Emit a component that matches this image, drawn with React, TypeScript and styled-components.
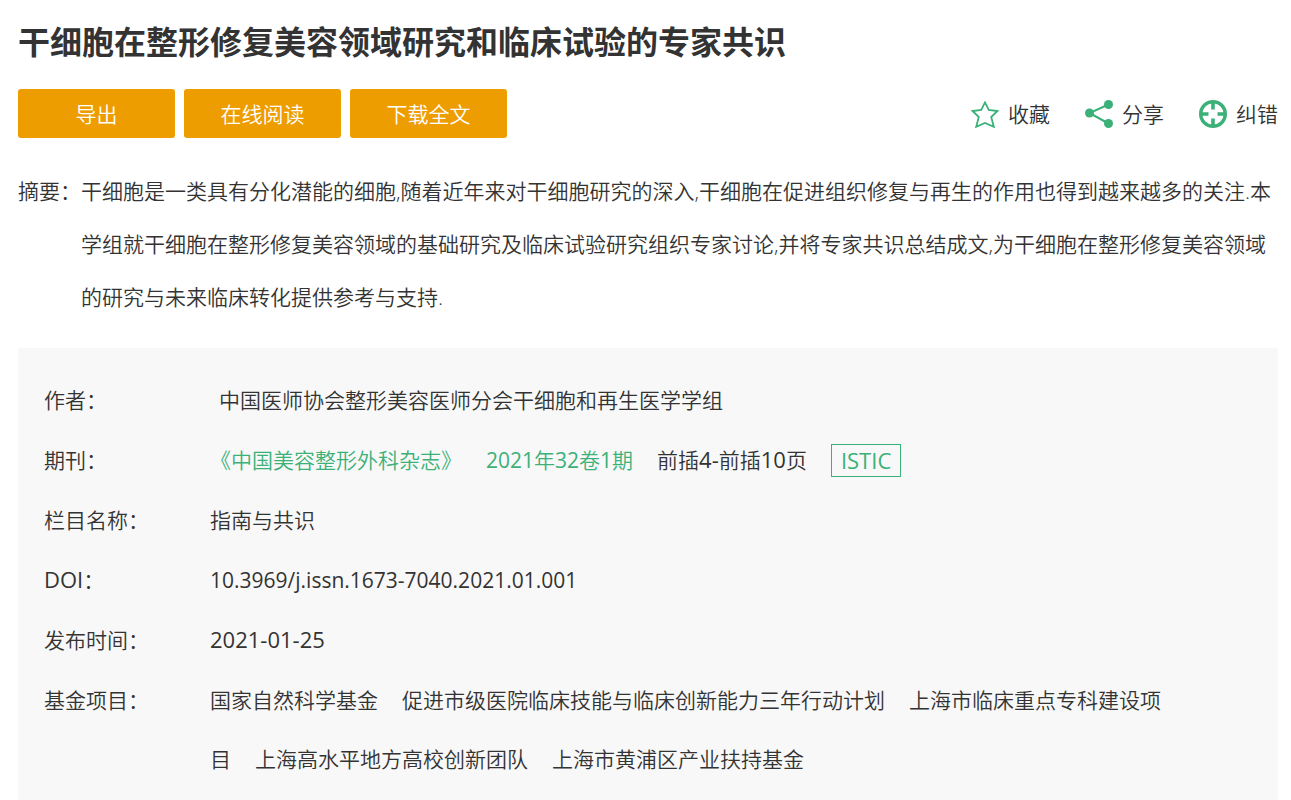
import React from "react";
import styled, { createGlobalStyle } from "styled-components";

const GREEN = "#3bb178";
const INK = "#333333";

const GlobalStyle = createGlobalStyle`
  * {
    box-sizing: border-box;
  }
  body {
    margin: 0;
    background: #ffffff;
    color: ${INK};
    font-family: "Open Sans", "Noto Sans CJK SC", sans-serif;
    font-size: 21px;
    font-weight: 350;
  }
  a {
    color: inherit;
    text-decoration: none;
  }
`;

const Page = styled.main`
  padding: 18px 13px 0 18px;
`;

const Title = styled.h1`
  margin: 0 0 23px;
  font-size: 32px;
  line-height: 48px;
  font-weight: 700;
`;

const Toolbar = styled.div`
  display: flex;
  align-items: center;
  justify-content: space-between;
`;

const ButtonGroup = styled.div`
  display: flex;
  gap: 9px;
`;

const PrimaryButton = styled.button`
  width: 157px;
  height: 49px;
  padding: 0 0 2px;
  border: 0;
  border-radius: 3px;
  background: #ee9d00;
  color: #ffffff;
  font: inherit;
  cursor: pointer;
`;

const ActionGroup = styled.div`
  display: flex;
  gap: 35px;
`;

const ActionButton = styled.button`
  display: flex;
  align-items: center;
  gap: 9px;
  padding: 0;
  border: 0;
  background: none;
  color: inherit;
  font: inherit;
  cursor: pointer;

  svg {
    display: block;
    width: 28px;
    height: 28px;
  }
`;

const ActionLabel = styled.span`
  padding-bottom: 2px;
`;

const Abstract = styled.section`
  display: flex;
  margin: 27px 0 24px;
  line-height: 53px;
`;

const AbstractLabel = styled.span`
  flex: none;
  width: 63px;
`;

const AbstractText = styled.p`
  flex: 1;
  margin: 0;
`;

const Details = styled.dl`
  display: flex;
  flex-direction: column;
  gap: 1px;
  margin: 0;
  padding: 23px 108px 26px 26px;
  background: #f8f8f8;
  line-height: 59px;
`;

const Row = styled.div`
  display: flex;
`;

const Term = styled.dt`
  flex: none;
  width: 166px;
`;

const Value = styled.dd`
  flex: 1;
  margin: 0;
`;

const Author = styled.span`
  margin-left: 9px;
`;

const Latin = styled.span<{ $size?: number }>`
  font-size: ${(p) => p.$size ?? 22}px;
  font-weight: 400;
  line-height: 1;
`;

const JournalValue = styled(Value)`
  display: flex;
  align-items: center;
  gap: 24px;
`;

const GreenLink = styled.a`
  color: ${GREEN};
`;

const Badge = styled(Latin)`
  padding: 0 9px;
  border: 1px solid ${GREEN};
  color: ${GREEN};
  line-height: 31px;
`;

const Fund = styled.span`
  margin-right: 24px;
`;

const StarIcon = () => (
  <svg viewBox="0 0 28 28" fill="none" stroke={GREEN} strokeWidth="1.8" aria-hidden="true">
    <path d="M14 2.4 17.8 9.9 26.4 11 20.2 17 22.8 26.8 14 23 5.2 26.8 7.8 17 1.6 11 10.2 9.9Z" />
  </svg>
);

const ShareIcon = () => (
  <svg viewBox="0 0 28 28" fill={GREEN} stroke={GREEN} aria-hidden="true">
    <path d="M23.5 4.5 4.5 13 23.5 23.5" fill="none" strokeWidth="2" />
    <circle cx="23.5" cy="4.5" r="4.5" stroke="none" />
    <circle cx="4.5" cy="13" r="4.5" stroke="none" />
    <circle cx="23.5" cy="23.5" r="4.5" stroke="none" />
  </svg>
);

const TargetIcon = () => (
  <svg viewBox="0 0 28 28" fill="none" stroke={GREEN} aria-hidden="true">
    <circle cx="14" cy="14" r="12.3" strokeWidth="3.4" />
    <path d="M14 2v7.5M14 18.5V26M2 14h7.5M18.5 14H26" strokeWidth="3.6" />
  </svg>
);

const exportActions = ["导出", "在线阅读", "下载全文"];

const sideActions = [
  { label: "收藏", Icon: StarIcon },
  { label: "分享", Icon: ShareIcon },
  { label: "纠错", Icon: TargetIcon },
];

const funds = [
  "国家自然科学基金",
  "促进市级医院临床技能与临床创新能力三年行动计划",
  "上海市临床重点专科建设项目",
  "上海高水平地方高校创新团队",
  "上海市黄浦区产业扶持基金",
];

export default function App() {
  return (
    <Page lang="zh-CN">
      <GlobalStyle />
      <Title>干细胞在整形修复美容领域研究和临床试验的专家共识</Title>
      <Toolbar>
        <ButtonGroup>
          {exportActions.map((label) => (
            <PrimaryButton key={label} type="button">
              {label}
            </PrimaryButton>
          ))}
        </ButtonGroup>
        <ActionGroup>
          {sideActions.map(({ label, Icon }) => (
            <ActionButton key={label} type="button">
              <Icon />
              <ActionLabel>{label}</ActionLabel>
            </ActionButton>
          ))}
        </ActionGroup>
      </Toolbar>
      <Abstract>
        <AbstractLabel>摘要：</AbstractLabel>
        <AbstractText>
          干细胞是一类具有分化潜能的细胞,随着近年来对干细胞研究的深入,干细胞在促进组织修复与再生的作用也得到越来越多的关注.本学组就干细胞在整形修复美容领域的基础研究及临床试验研究组织专家讨论,并将专家共识总结成文,为干细胞在整形修复美容领域的研究与未来临床转化提供参考与支持.
        </AbstractText>
      </Abstract>
      <Details>
        <Row>
          <Term>作者：</Term>
          <Value>
            <Author>中国医师协会整形美容医师分会干细胞和再生医学学组</Author>
          </Value>
        </Row>
        <Row>
          <Term>期刊：</Term>
          <JournalValue>
            <GreenLink href="#journal">《中国美容整形外科杂志》</GreenLink>
            <GreenLink href="#issue">
              <Latin $size={21}>2021</Latin>年<Latin $size={21}>32</Latin>卷<Latin $size={21}>1</Latin>期
            </GreenLink>
            <span>
              前插<Latin>4-</Latin>前插<Latin>10</Latin>页
            </span>
            <Badge>ISTIC</Badge>
          </JournalValue>
        </Row>
        <Row>
          <Term>栏目名称：</Term>
          <Value>指南与共识</Value>
        </Row>
        <Row>
          <Term>
            <Latin>DOI</Latin>：
          </Term>
          <Value>
            <Latin $size={21}>10.3969/j.issn.1673-7040.2021.01.001</Latin>
          </Value>
        </Row>
        <Row>
          <Term>发布时间：</Term>
          <Value>
            <Latin>2021-01-25</Latin>
          </Value>
        </Row>
        <Row>
          <Term>基金项目：</Term>
          <Value>
            {funds.map((fund) => (
              <Fund key={fund}>{fund}</Fund>
            ))}
          </Value>
        </Row>
      </Details>
    </Page>
  );
}
